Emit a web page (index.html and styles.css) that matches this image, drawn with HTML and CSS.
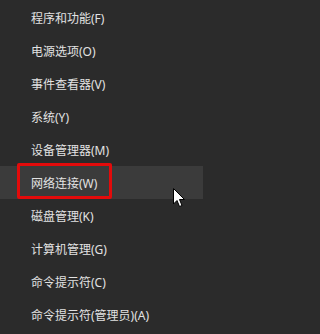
FILE: index.html
```html
<!DOCTYPE html>
<html lang="zh-CN">
<head>
<meta charset="utf-8">
<link rel="stylesheet" href="styles.css">
</head>
<body>
<ul class="menu">
  <li class="item">程序和功能(F)</li>
  <li class="item">电源选项(O)</li>
  <li class="item">事件查看器(V)</li>
  <li class="item">系统(Y)</li>
  <li class="item">设备管理器(M)</li>
  <li class="item hover">网络连接(W)</li>
  <li class="item">磁盘管理(K)</li>
  <li class="item">计算机管理(G)</li>
  <li class="item">命令提示符(C)</li>
  <li class="item">命令提示符(管理员)(A)</li>
</ul>
<svg class="cursor" width="13" height="20" viewBox="0 0 13 20">
  <path d="M0.5 0.5 L0.5 16 L4 12.5 L6.5 18.5 L9 17.5 L6.5 11.5 L11.5 11.5 Z" fill="#fff" stroke="#000" stroke-width="1"/>
</svg>
</body>
</html>
```
FILE: styles.css
```css
html, body {
  margin: 0;
  padding: 0;
  background: #2b2b2b;
  width: 203px;
  height: 334px;
  overflow: hidden;
}
body {
  position: relative;
  font-family: "Noto Sans", "Noto Sans CJK SC", sans-serif;
}
.menu {
  list-style: none;
  margin: 0;
  padding: 1px 0 0 0;
  display: flex;
  flex-direction: column;
}
.item {
  height: 33px;
  display: flex;
  align-items: center;
  padding-left: 31px;
  font-size: 12px;
  color: #e2e2e2;
  position: relative;
}
.hover {
  background: #3b3b3b;
}
.hover::after {
  content: "";
  position: absolute;
  left: 17px;
  top: -3px;
  width: 89px;
  height: 30px;
  border: 3px solid #e30b0b;
  border-radius: 2px;
}
.cursor {
  position: absolute;
  left: 173px;
  top: 188px;
}
```
